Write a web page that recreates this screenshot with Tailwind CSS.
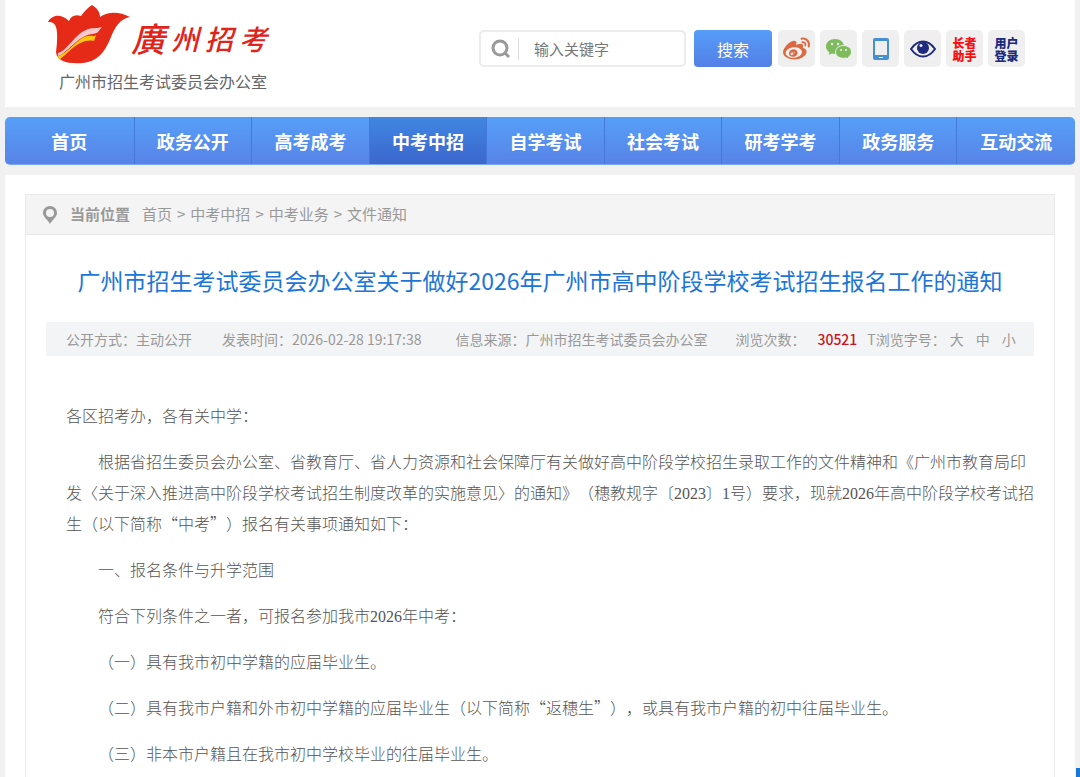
<!DOCTYPE html>
<html lang="zh-CN">

<head>
    <meta charset="UTF-8">
    <meta name="viewport" content="width=device-width, initial-scale=1.0">
    <script src="https://cdn.jsdelivr.net/npm/@tailwindcss/browser@4"></script>
    <title>广州市招生考试委员会办公室</title>
</head>

<body class="bg-[#f1f1f1] font-['Noto_Sans_CJK_SC',sans-serif] px-[5px] min-h-screen flex flex-col">
    <header class="bg-white flex justify-between items-start h-[107px] pr-[50px]">
        <a href="#" class="block pl-[42px] pt-[5px]">
            <span class="flex items-start">
                <svg class="w-[84px] h-[60px]" viewBox="0 0 84 60" aria-hidden="true">
                    <path fill="#e62a18" d="M1 17C5 10 13 8 22 16C24 11 28 9 34 11C37 7 40 3 45 0C50 3 53 7 53 12C62 6 73 7 83 12C73 14 68 22 64 32C59 44 53 56 36 58C22 59 10 57 9 47C10 40 11 28 9 22C7 17 4 17 1 17Z" />
                    <path fill="#f8c9cf" d="M11 48C19 47 28 29 39 25C45 22 49 24 55 22C51 26 52 28 46 29C31 30 23 46 11 51Z" />
                    <path fill="#fbc60c" d="M11 51C23 47 31 32 41 31C45 30 47 32 49 30L47 36C32 33 22 48 12 55Z" />
                </svg>
                <span class="flex items-center gap-[6px] h-[66px] text-[#e0241c] italic font-medium text-[28px] leading-none"><span class="text-[34px]">廣</span><span>州</span><span>招</span><span>考</span></span>
            </span>
            <span class="block pl-3 text-base leading-5 text-[#666]">广州市招生考试委员会办公室</span>
        </a>

        <div class="flex items-center pt-[30px]">
            <form class="flex items-center gap-2 mr-[6px]">
                <div class="flex items-center w-[207px] h-[37px] border-2 border-[#ececec] rounded-[5px] pl-[10px]">
                    <label for="keyword" aria-label="关键字" class="shrink-0">
                        <svg class="block w-5 h-5" viewBox="0 0 20 20" fill="none" stroke="#999">
                            <circle cx="9" cy="9" r="7" stroke-width="3" />
                            <path d="M14 14l4 4" stroke-width="3" />
                        </svg>
                    </label>
                    <input id="keyword" type="text" placeholder="输入关键字"
                        class="ml-[7px] h-[22px] w-full min-w-0 border-l border-[#ddd] pl-[15px] text-[15px] leading-[22px] outline-none placeholder:text-[#777]">
                </div>
                <button type="submit"
                    class="w-[78px] h-[37px] rounded-[4px] bg-linear-to-b from-[#569cf8] to-[#5380e6] text-white text-base">搜索</button>
            </form>

            <div class="flex gap-[5px]">
                <a href="#" aria-label="微博" class="w-[37px] h-[37px] rounded-[5px] bg-[#efefef] flex items-center justify-center">
                    <svg class="w-[27px] h-[27px]" viewBox="0 0 24 24" fill="#dc6a41">
                        <path d="M10.098 20.323c-3.977.391-7.414-1.406-7.672-4.02-.259-2.609 2.759-5.047 6.74-5.441 3.979-.394 7.413 1.404 7.671 4.018.259 2.6-2.759 5.049-6.737 5.439l-.002.004zM9.05 17.219c-.384.616-1.208.884-1.829.602-.612-.279-.793-.991-.406-1.593.379-.595 1.176-.861 1.793-.601.622.263.82.972.442 1.592zm1.27-1.627c-.141.237-.449.353-.689.253-.236-.09-.313-.361-.177-.586.138-.227.436-.346.672-.24.239.09.315.36.18.601l.014-.028zm.176-2.719c-1.893-.493-4.033.45-4.857 2.118-.836 1.704-.026 3.591 1.886 4.21 1.983.64 4.318-.341 5.132-2.179.8-1.793-.201-3.642-2.161-4.149zm7.563-1.224c-.346-.105-.57-.18-.405-.615.375-.977.42-1.804 0-2.404-.781-1.112-2.915-1.053-5.364-.03 0 0-.766.331-.571-.271.376-1.217.315-2.224-.27-2.809-1.338-1.337-4.869.045-7.888 3.08C1.309 10.87 0 13.273 0 15.348c0 3.981 5.099 6.395 10.086 6.395 6.536 0 10.888-3.801 10.888-6.82 0-1.822-1.547-2.854-2.915-3.284v.01zm1.908-5.092c-.766-.856-1.908-1.187-2.96-.962-.436.09-.706.511-.616.932.09.42.511.691.932.602.511-.105 1.067.044 1.442.465.376.421.466.977.316 1.473-.136.406.089.856.51.992.405.119.857-.105.992-.512.33-1.021.12-2.178-.646-3.035l.03.045zm2.418-2.195c-1.576-1.757-3.905-2.419-6.054-1.968-.496.104-.812.587-.706 1.081.104.496.586.813 1.082.707 1.532-.331 3.185.15 4.296 1.383 1.112 1.246 1.429 2.943.947 4.416-.165.48.106 1.007.586 1.157.479.165.991-.104 1.157-.586.675-2.088.241-4.478-1.338-6.235l.03.045z" />
                    </svg>
                </a>
                <a href="#" aria-label="微信" class="w-[37px] h-[37px] rounded-[5px] bg-[#efefef] flex items-center justify-center">
                    <svg class="w-[26px] h-[22px]" viewBox="0 0 26 22">
                        <path fill="#7dbb5c" d="M9 1C4 1 0 4 0 8.500C0 11 1.300 13 3.500 14.400L2.500 17L6 15.400C7 15.700 8 15.800 9.500 15.700C14 15.500 18 12.500 18 8.500C18 4 14 1 9 1Z" />
                        <path fill="#7dbb5c" stroke="#efefef" d="M17.500 7.500C13 7.500 9.500 10.300 9.500 14C9.500 17.700 13 20.300 17.500 20.300L20.500 20L23 21.300L22.500 19C24.500 17.800 25.500 16 25.500 14C25.500 10.300 22 7.500 17.500 7.500Z" />
                        <g fill="#efefef">
                            <circle cx="6" cy="6" r="1.200" />
                            <circle cx="12" cy="6" r="1.200" />
                            <circle cx="15" cy="12" r="1" />
                            <circle cx="20" cy="12" r="1" />
                        </g>
                    </svg>
                </a>
                <a href="#" aria-label="手机版" class="w-[37px] h-[37px] rounded-[5px] bg-[#efefef] flex items-center justify-center">
                    <svg class="w-[18px] h-[22px]" viewBox="0 0 18 22">
                        <rect x="1" width="16" height="22" rx="2" fill="#468fd5" />
                        <path fill="#efefef" d="M3 3h12v14H3z" />
                        <path stroke="#efefef" d="M7 19.500h4" />
                    </svg>
                </a>
                <a href="#" aria-label="无障碍" class="w-[37px] h-[37px] rounded-[5px] bg-[#efefef] flex items-center justify-center">
                    <svg class="w-[26px] h-[18px]" viewBox="0 0 26 18">
                        <path fill="none" stroke="#1e2a7d" stroke-width="2" d="M1 9C8-1 18-1 25 9C18 19 8 19 1 9Z" />
                        <circle cx="13" cy="8" r="6" fill="#1e2a7d" />
                        <circle cx="11" cy="5.500" r="1.500" fill="#efefef" />
                    </svg>
                </a>
                <a href="#" class="w-[37px] h-[37px] rounded-[5px] bg-[#efefef] flex items-center justify-center text-center text-xs leading-[13px] font-black text-[#fb0d0d]">长者<br>助手</a>
                <a href="#" class="w-[37px] h-[37px] rounded-[5px] bg-[#efefef] flex items-center justify-center text-center text-xs leading-[13px] font-black text-[#1c2a80]">用户<br>登录</a>
            </div>
        </div>
    </header>

    <nav class="mt-[10px] grid grid-cols-[129fr_repeat(8,117fr)] h-[48px] rounded-[5px] overflow-hidden bg-linear-to-b from-[#569ff9] to-[#5783e6] divide-x divide-[#4579d8] border-b border-[#78a8f5] text-white text-lg font-bold">
        <a href="#" class="flex items-center justify-center">首页</a>
        <a href="#" class="flex items-center justify-center">政务公开</a>
        <a href="#" class="flex items-center justify-center">高考成考</a>
        <a href="#" class="flex items-center justify-center bg-linear-to-b from-[#4187e2] to-[#3b66cd]">中考中招</a>
        <a href="#" class="flex items-center justify-center">自学考试</a>
        <a href="#" class="flex items-center justify-center">社会考试</a>
        <a href="#" class="flex items-center justify-center">研考学考</a>
        <a href="#" class="flex items-center justify-center">政务服务</a>
        <a href="#" class="flex items-center justify-center">互动交流</a>
    </nav>

    <main class="mt-[10px] bg-white px-5 pt-[19px] flex-1 flex flex-col">
        <div class="border border-b-0 border-[#ebebeb] flex-1">
            <div class="flex items-center h-10 bg-[#f4f4f4] border-b border-[#e8e8e8] pl-[17px] text-[15px] text-[#999]">
                <svg class="w-[14px] h-[18px] mr-[13px]" viewBox="0 0 14 18" aria-hidden="true">
                    <path fill="#999" fill-rule="evenodd" d="M7 0C3 0 0 3 0 7C0 11 5 14 7 18C9 14 14 11 14 7C14 3 11 0 7 0ZM7 3A4 4 0 1 1 7 11A4 4 0 1 1 7 3Z" />
                </svg>
                <span class="font-bold mr-3">当前位置</span>
                <div class="flex gap-[5px]">
                    <a href="#">首页</a><span>&gt;</span>
                    <a href="#">中考中招</a><span>&gt;</span>
                    <a href="#">中考业务</a><span>&gt;</span>
                    <a href="#">文件通知</a>
                </div>
            </div>

            <h1 class="mt-[25px] text-[23px] leading-10 text-center text-[#1c76d8]">广州市招生考试委员会办公室关于做好2026年广州市高中阶段学校考试招生报名工作的通知</h1>

            <div class="mt-[22px] mx-5 h-[34px] bg-[#f3f4f5] pl-5 flex items-center text-sm text-[#999] whitespace-nowrap">
                <span class="mr-[30px]">公开方式：主动公开</span>
                <span class="mr-[34px]">发表时间：2026-02-28 19:17:38</span>
                <span class="mr-[28px]">信息来源：广州市招生考试委员会办公室</span>
                <span class="mr-3">浏览次数：</span>
                <span class="mr-[10px] font-medium text-[#c7161d]">30521</span>
                <span>T浏览字号：</span>
                <span class="flex gap-3 ml-1">
                    <button type="button">大</button>
                    <button type="button">中</button>
                    <button type="button">小</button>
                </span>
            </div>

            <article class="mt-[44px] pl-10 pr-4 space-y-[15px] text-base leading-[31px] text-[#555] font-light [text-spacing-trim:space-all]">
                <p>各区招考办，各有关中学：</p>
                <p class="indent-8">根据省招生委员会办公室、省教育厅、省人力资源和社会保障厅有关做好高中阶段学校招生录取工作的文件精神和《广州市教育局印发〈关于深入推进高中阶段学校考试招生制度改革的实施意见〉的通知》（穗教规字〔<span class="font-['Liberation_Serif',serif] leading-none">2023</span>〕<span class="font-['Liberation_Serif',serif] leading-none">1</span>号）要求，现就<span class="font-['Liberation_Serif',serif] leading-none">2026</span>年高中阶段学校考试招生（以下简称“中考”）报名有关事项通知如下：</p>
                <p class="indent-8">一、报名条件与升学范围</p>
                <p class="indent-8">符合下列条件之一者，可报名参加我市<span class="font-['Liberation_Serif',serif] leading-none">2026</span>年中考：</p>
                <p class="indent-8">（一）具有我市初中学籍的应届毕业生。</p>
                <p class="indent-8">（二）具有我市户籍和外市初中学籍的应届毕业生（以下简称“返穗生”），或具有我市户籍的初中往届毕业生。</p>
                <p class="indent-8">（三）非本市户籍且在我市初中学校毕业的往届毕业生。</p>
            </article>
        </div>
    </main>

    <a href="#" aria-label="返回顶部" class="fixed bottom-0 right-0 w-1 h-[9px] bg-[#1c76d8]"></a>
</body>

</html>
